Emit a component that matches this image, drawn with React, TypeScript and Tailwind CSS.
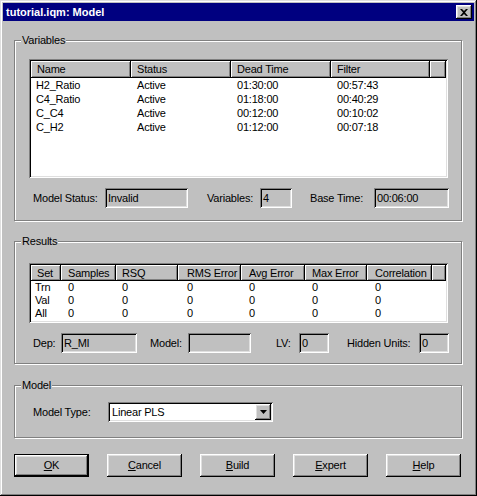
import type { ReactNode } from 'react'

const sunken =
  'shadow-[inset_1px_1px_0_#808080,inset_-1px_-1px_0_#fff,inset_2px_2px_0_#000,inset_-2px_-2px_0_#dfdfdf]'
const raised =
  'shadow-[inset_-1px_-1px_0_#000,inset_1px_1px_0_#fff,inset_-2px_-2px_0_#808080,inset_2px_2px_0_#dfdfdf]'
const headerCell =
  'shadow-[inset_-1px_-1px_0_#000,inset_1px_1px_0_#fff,inset_-2px_-2px_0_#808080]'

const variables = [
  ['H2_Ratio', 'Active', '01:30:00', '00:57:43'],
  ['C4_Ratio', 'Active', '01:18:00', '00:40:29'],
  ['C_C4', 'Active', '00:12:00', '00:10:02'],
  ['C_H2', 'Active', '01:12:00', '00:07:18'],
]

const varCols = [
  { name: 'Name', w: 100, p: 6, dp: 5 },
  { name: 'Status', w: 100, p: 6, dp: 6 },
  { name: 'Dead Time', w: 100, p: 6, dp: 6 },
  { name: 'Filter', w: 99, p: 6, dp: 6 },
]

const resultCols = [
  { name: 'Set', w: 30, p: 6 },
  { name: 'Samples', w: 55, p: 7 },
  { name: 'RSQ', w: 62, p: 6 },
  { name: 'RMS Error', w: 63, p: 9 },
  { name: 'Avg Error', w: 64, p: 8 },
  { name: 'Max Error', w: 62, p: 7 },
  { name: 'Correlation', w: 65, p: 8 },
]

const results = [
  ['Trn', '0', '0', '0', '0', '0', '0'],
  ['Val', '0', '0', '0', '0', '0', '0'],
  ['All', '0', '0', '0', '0', '0', '0'],
]

function Group({ label, className, children }: { label: string; className: string; children: ReactNode }) {
  return (
    <div
      className={`relative ml-[11px] w-[448px] border border-[#808080] shadow-[inset_1px_1px_0_#fff,1px_1px_0_#fff] ${className}`}
    >
      <span className="absolute left-[6px] top-[-8px] bg-[#c0c0c0] px-[1px] leading-[14px]">{label}</span>
      {children}
    </div>
  )
}

function Field({ value, width, bg = 'bg-[#c0c0c0]' }: { value: string; width: string; bg?: string }) {
  return (
    <div className={`${sunken} ${bg} ${width} h-[20px] shrink-0 pl-[3px] leading-[20px]`}>{value}</div>
  )
}

function Label({ text, className }: { text: string; className: string }) {
  return <span className={`shrink-0 whitespace-nowrap ${className}`}>{text}</span>
}

function Button({ children, isDefault }: { children: ReactNode; isDefault?: boolean }) {
  return (
    <div
      className={`flex h-[23px] w-[75px] items-center justify-center ${
        isDefault ? 'border border-black' : ''
      }`}
    >
      <div className={`${raised} flex h-full w-full items-center justify-center`}>{children}</div>
    </div>
  )
}

export default function App() {
  return (
    <div className="h-[496px] w-[477px] bg-[#c0c0c0] p-[3px] font-['Liberation_Sans',Arial,sans-serif] text-[11px] tracking-[-0.2px] text-black shadow-[inset_-1px_-1px_0_#000,inset_1px_1px_0_#dfdfdf,inset_-2px_-2px_0_#808080,inset_2px_2px_0_#fff]">
      {/* title bar */}
      <div className="flex h-[18px] items-center justify-between bg-[#000080] pl-[3px] pr-[2px]">
        <span className="text-[11px] font-bold leading-[18px] tracking-normal text-white">tutorial.iqm: Model</span>
        <div className={`${raised} flex h-[14px] w-[16px] items-center justify-center bg-[#c0c0c0]`}>
          <svg width="8" height="7" viewBox="0 0 8 7">
            <path d="M0 0h2l2 2 2-2h2L5 3.5 8 7H6L4 5 2 7H0l3-3.5z" fill="#000" />
          </svg>
        </div>
      </div>

      <Group label="Variables" className="mt-[19px] h-[181px]">
        <div className={`${sunken} ml-[14px] mt-[18px] h-[119px] w-[419px] bg-white p-[2px]`}>
          <div className="flex h-[17px] bg-[#c0c0c0]">
            {varCols.map((c) => (
              <div
                key={c.name}
                className={`${headerCell} h-full shrink-0 overflow-hidden whitespace-nowrap leading-[17px]`}
                style={{ width: c.w, paddingLeft: c.p }}
              >
                {c.name}
              </div>
            ))}
            <div className={`${headerCell} h-full flex-1`} />
          </div>
          {variables.map((row) => (
            <div key={row[0]} className="flex h-[14px] leading-[14px]">
              {row.map((v, i) => (
                <div key={i} className="shrink-0" style={{ width: varCols[i].w, paddingLeft: varCols[i].dp }}>
                  {v}
                </div>
              ))}
            </div>
          ))}
        </div>
        <div className="mt-[10px] flex items-center pl-[18px]">
          <Label text="Model Status:" className="w-[72px]" />
          <Field value="Invalid" width="w-[83px]" />
          <Label text="Variables:" className="ml-[19px] w-[53px]" />
          <Field value="4" width="w-[32px]" />
          <Label text="Base Time:" className="ml-[18px] w-[64px]" />
          <Field value="00:06:00" width="w-[75px]" />
        </div>
      </Group>

      <Group label="Results" className="mt-[20px] h-[123px]">
        <div className={`${sunken} ml-[14px] mt-[21px] h-[60px] w-[419px] bg-white p-[2px]`}>
          <div className="flex h-[16px] bg-[#c0c0c0]">
            {resultCols.map((c) => (
              <div
                key={c.name}
                className={`${headerCell} h-full shrink-0 overflow-hidden whitespace-nowrap leading-[16px]`}
                style={{ width: c.w, paddingLeft: c.p }}
              >
                {c.name}
              </div>
            ))}
            <div className={`${headerCell} h-full flex-1`} />
          </div>
          {results.map((row) => (
            <div key={row[0]} className="flex h-[13px] leading-[13px]">
              {row.map((v, i) => (
                <div
                  key={i}
                  className="shrink-0"
                  style={{ width: resultCols[i].w, paddingLeft: i === 0 ? 4 : resultCols[i].p }}
                >
                  {v}
                </div>
              ))}
            </div>
          ))}
        </div>
        <div className="mt-[10px] flex items-center pl-[18px]">
          <Label text="Dep:" className="w-[28px]" />
          <Field value="R_MI" width="w-[76px]" />
          <Label text="Model:" className="ml-[13px] w-[38px]" />
          <Field value="" width="w-[63px]" />
          <Label text="LV:" className="ml-[25px] w-[23px]" />
          <Field value="0" width="w-[30px]" />
          <Label text="Hidden Units:" className="ml-[18px] w-[72px]" />
          <Field value="0" width="w-[30px]" />
        </div>
      </Group>

      <Group label="Model" className="mt-[21px] h-[53px]">
        <div className="mt-[16px] flex items-center pl-[18px]">
          <Label text="Model Type:" className="w-[75px]" />
          <div className={`${sunken} flex h-[20px] w-[165px] items-center bg-white p-[2px]`}>
            <span className="flex-1 pl-[2px] leading-[16px]">Linear PLS</span>
            <div className={`${raised} flex h-[16px] w-[16px] items-center justify-center bg-[#c0c0c0]`}>
              <svg width="7" height="4" viewBox="0 0 7 4">
                <path d="M0 0h7L3.5 4z" fill="#000" />
              </svg>
            </div>
          </div>
        </div>
      </Group>

      <div className="ml-[11px] mt-[16px] flex gap-[18px]">
        <Button isDefault>
          <span className="underline">O</span>K
        </Button>
        <Button>
          <span className="underline">C</span>ancel
        </Button>
        <Button>
          <span className="underline">B</span>uild
        </Button>
        <Button>
          <span className="underline">E</span>xpert
        </Button>
        <Button>
          <span className="underline">H</span>elp
        </Button>
      </div>
    </div>
  )
}
